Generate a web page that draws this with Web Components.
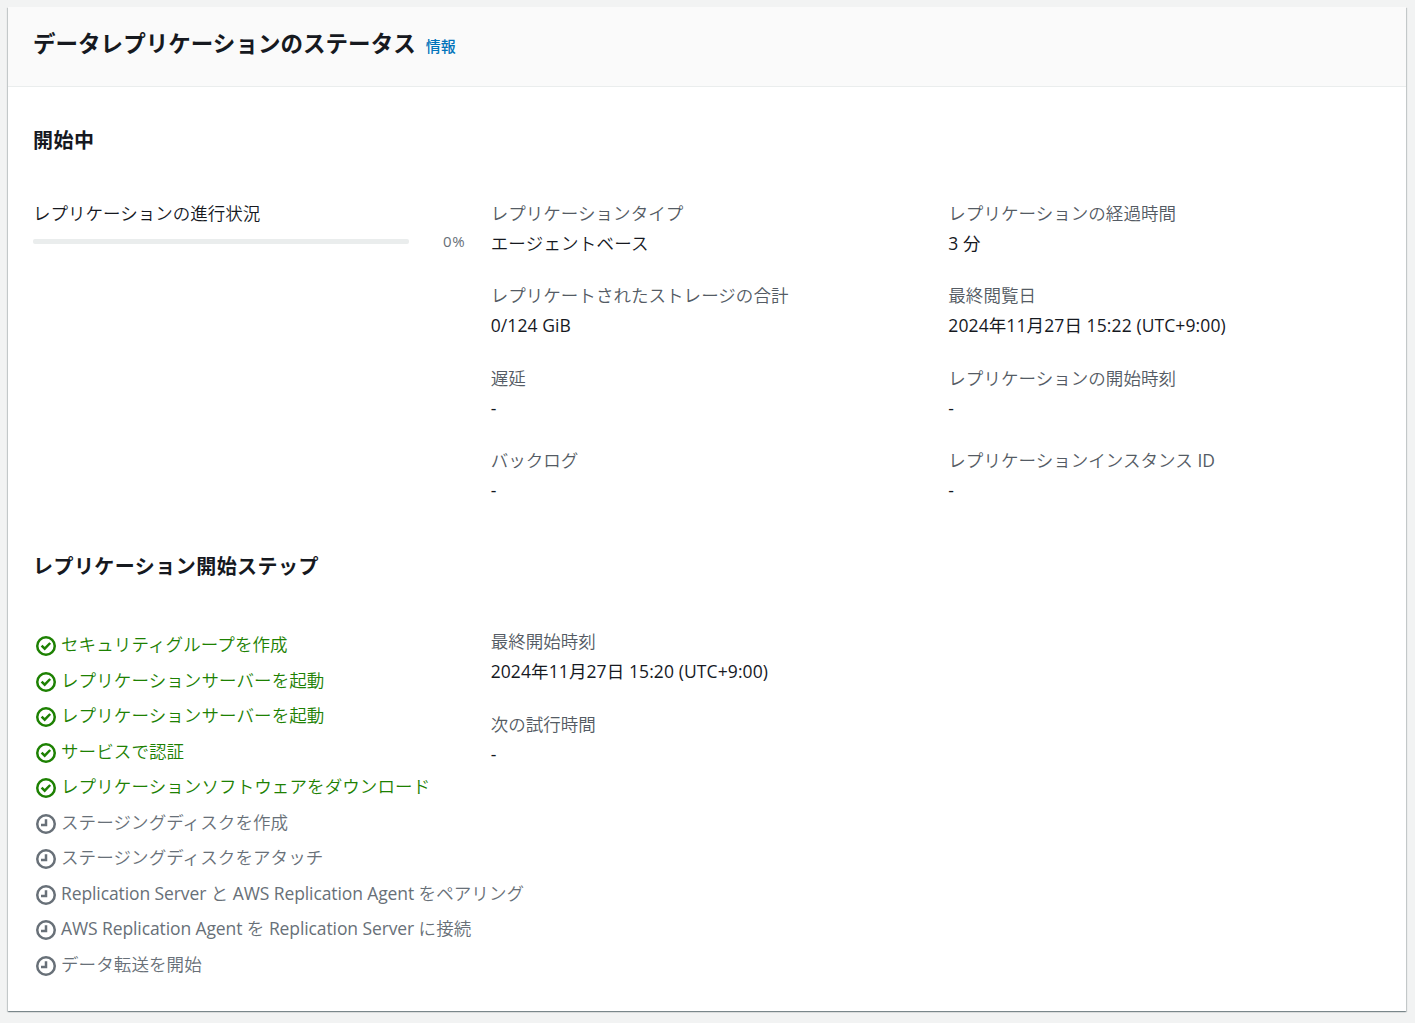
<!DOCTYPE html>
<html lang="ja">
<head>
<meta charset="utf-8">
<title>データレプリケーションのステータス</title>
<style>
html { background: #f2f3f3; }
body {
  margin: 0;
  padding: 7px 9px 12px 8px;
  box-sizing: border-box;
  height: 1023px;
  background: #f2f3f3;
  color: #16191f;
  font: 350 17.5px/27.5px "Open Sans", "Noto Sans CJK JP", sans-serif;
}
.l { font-weight: 400; letter-spacing: -0.1px; }
.n { font-weight: 400; letter-spacing: 0.1px; }
</style>
</head>
<body>
<status-panel>
  <span slot="title">データレプリケーションのステータス</span>
  <span slot="info">情報</span>
  <panel-section heading="開始中">
    <info-column>
      <replication-progress value="0">レプリケーションの進行状況</replication-progress>
    </info-column>
    <info-column>
      <key-value label="レプリケーションタイプ">エージェントベース</key-value>
      <key-value label="レプリケートされたストレージの合計"><span class="n">0/124 GiB</span></key-value>
      <key-value label="遅延"><span class="n">-</span></key-value>
      <key-value label="バックログ"><span class="n">-</span></key-value>
    </info-column>
    <info-column>
      <key-value label="レプリケーションの経過時間"><span class="n">3 分</span></key-value>
      <key-value label="最終閲覧日"><span class="n">2024年11月27日 15:22 (UTC+9:00)</span></key-value>
      <key-value label="レプリケーションの開始時刻"><span class="n">-</span></key-value>
      <key-value label="レプリケーションインスタンス ID"><span class="n">-</span></key-value>
    </info-column>
  </panel-section>
  <panel-section heading="レプリケーション開始ステップ" class="steps">
    <step-list>
      <step-item state="done">セキュリティグループを作成</step-item>
      <step-item state="done">レプリケーションサーバーを起動</step-item>
      <step-item state="done">レプリケーションサーバーを起動</step-item>
      <step-item state="done">サービスで認証</step-item>
      <step-item state="done">レプリケーションソフトウェアをダウンロード</step-item>
      <step-item>ステージングディスクを作成</step-item>
      <step-item>ステージングディスクをアタッチ</step-item>
      <step-item><span class="l">Replication Server </span>と<span class="l"> AWS Replication Agent </span>をペアリング</step-item>
      <step-item><span class="l">AWS Replication Agent </span>を<span class="l"> Replication Server </span>に接続</step-item>
      <step-item>データ転送を開始</step-item>
    </step-list>
    <info-column>
      <key-value label="最終開始時刻"><span class="n">2024年11月27日 15:20 (UTC+9:00)</span></key-value>
      <key-value label="次の試行時間"><span class="n">-</span></key-value>
    </info-column>
  </panel-section>
</status-panel>
<script>
const define = (name, html, init) => {
  const template = document.createElement('template');
  template.innerHTML = html;
  customElements.define(name, class extends HTMLElement {
    constructor() {
      super();
      this.attachShadow({ mode: 'open' }).append(template.content.cloneNode(true));
    }
    connectedCallback() { if (init) init(this, this.shadowRoot); }
  });
};

define('status-panel', `
<style>
:host { display: flex; flex-direction: column; box-sizing: border-box; height: 1004px; background: #fff;
  box-shadow: 0 1px 1px 0 rgba(0,28,36,.3), 1px 1px 1px 0 rgba(0,28,36,.15), -1px 1px 1px 0 rgba(0,28,36,.15); }
header { display: flex; align-items: baseline; gap: 10px; box-sizing: border-box; height: 80px;
  padding: 22px 25px 0; background: #fafafa; border-bottom: 1px solid #eaeded; }
h2 { margin: 0; font-size: 22.5px; line-height: 30px; font-weight: 700; letter-spacing: .04px; }
a { color: #0073bb; font-size: 15px; line-height: 25px; font-weight: 500; }
main { display: flex; flex-direction: column; padding: 40px 25px 0; }
</style>
<header><h2><slot name="title"></slot></h2><a><slot name="info"></slot></a></header>
<main><slot></slot></main>`);

define('panel-section', `
<style>
:host { display: block; }
:host(.steps) { margin-top: 48.5px; }
h3 { margin: 0 0 44.6px; font-size: 20px; line-height: 28px; font-weight: 700; letter-spacing: .45px; }
:host(.steps) h3 { margin-bottom: 47px; }
div { display: grid; grid-template-columns: repeat(3, minmax(0, 1fr)); column-gap: 25px; }
</style>
<h3></h3><div><slot></slot></div>`,
(host, root) => { root.querySelector('h3').textContent = host.getAttribute('heading'); });

define('info-column', `
<style>:host { display: flex; flex-direction: column; gap: 25px; }</style>
<slot></slot>`);

define('key-value', `
<style>
:host { display: flex; flex-direction: column; gap: 2.5px; }
.label { color: #545b64; letter-spacing: .04px; }
.value { letter-spacing: .2px; }
b { font-weight: 400; }
</style>
<div class="label"></div><div class="value"><slot></slot></div>`,
(host, root) => {
  const [jp, latin] = host.getAttribute('label').split(/(?= ID$)/);
  const label = root.querySelector('.label');
  label.textContent = jp;
  if (latin) {
    const b = document.createElement('b');
    b.textContent = latin;
    label.append(b);
  }
});

define('replication-progress', `
<style>
:host { display: block; }
.row { display: flex; align-items: center; gap: 34px; height: 29px; }
.track { width: 376px; height: 5px; border-radius: 2px; background: #eaeded; }
.num { color: #687078; font-size: 15px; font-weight: 400; letter-spacing: .6px; }
</style>
<div><slot></slot></div>
<div class="row"><div class="track"></div><span class="num"></span></div>`,
(host, root) => { root.querySelector('.num').textContent = host.getAttribute('value') + '%'; });

define('step-list', `
<style>:host { display: flex; flex-direction: column; gap: 8px; padding-top: 3px; white-space: nowrap; }</style>
<slot></slot>`);

define('step-item', `
<style>
:host { display: flex; gap: 5px; padding-left: 3px; color: #687078; letter-spacing: .1px; }
:host([state=done]) { color: #1d8102; }
svg { width: 20px; height: 20px; margin-top: 5px; flex: none; fill: none; stroke: currentColor; stroke-width: 2.5; }
path { stroke-width: 2.5; }
</style>
<svg viewBox="0 0 20 20"><circle cx="10" cy="10" r="8.75"/><path/></svg><span><slot></slot></span>`,
(host, root) => {
  root.querySelector('path').setAttribute('d',
    host.getAttribute('state') === 'done' ? 'M5.6 9.6l3.1 3.1L14.2 7' : 'M10 5.2V11H5');
});
</script>
</body>
</html>
